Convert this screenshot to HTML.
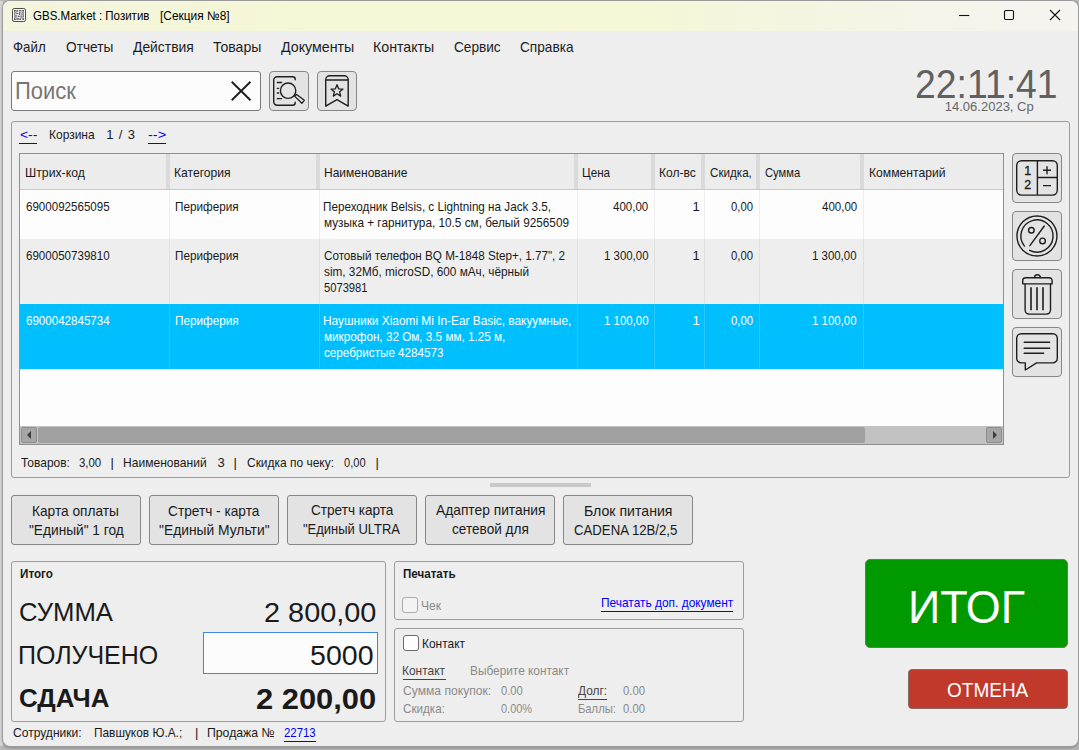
<!DOCTYPE html>
<html lang="ru">
<head>
<meta charset="utf-8">
<title>GBS.Market : Позитив [Секция №8]</title>
<style>
html,body{margin:0;padding:0;}
body{width:1079px;height:750px;overflow:hidden;background:#b7b7b7;font-family:"Liberation Sans",sans-serif;position:relative;}
#desk-left{position:absolute;left:0;top:0;width:3px;height:746px;background:#d8d8d8;}
#desk-top{position:absolute;left:0;top:0;width:1079px;height:1px;background:#b9b9b9;}
#win{position:absolute;left:2px;top:0;width:1075px;height:745px;border:1px solid #9b9b9b;border-radius:8px;background:#eeeeee;overflow:hidden;box-shadow:0 1px 3px rgba(0,0,0,.25);}
#root{position:absolute;left:0;top:0;width:1079px;height:750px;}
.abs{position:absolute;box-sizing:border-box;}
.t{position:absolute;white-space:pre;line-height:1em;transform-origin:0 0;}
#titlebar{left:3px;top:1px;width:1075px;height:30px;background:linear-gradient(90deg,#f4f5de 0,#f5f7d6 300px,#f5f7d7 640px,#f4f5e4 850px,#f5f4ee 1000px,#f5f4ee 100%);border-radius:7px 7px 0 0;}
.box{border:1px solid #9c9c9c;border-radius:3px;}
.btn{background:#e3e3e3;border:1px solid #868686;border-radius:4px;}
.hsep{background:#dadada;top:154px;height:35px;width:4px;}
.vline{background:rgba(0,0,0,0.06);top:190px;height:114px;width:1px;}
.vline2{background:rgba(255,255,255,0.16);top:304px;height:65px;width:1px;}
.ul{height:1px;}
</style>
</head>
<body>
<div id="desk-left"></div><div id="desk-top"></div>
<div id="win"></div>
<div id="root">
<div id="titlebar" class="abs"></div>
<!-- app icon -->
<svg class="abs" style="left:12px;top:8px" width="14" height="14" viewBox="0 0 14 14">
<rect x="0.5" y="0.5" width="13" height="13" rx="1.8" fill="#fcfcfc" stroke="#4a4a4a"/>
<g fill="#5a5a5a"><rect x="2" y="2" width="2.600" height="2.600"/><rect x="5.200" y="2" width="1" height="2"/><rect x="7" y="2" width="2" height="1.300"/><rect x="9.600" y="2" width="2.400" height="2.600"/><rect x="2" y="5.300" width="1.500" height="1.400"/><rect x="4.200" y="5" width="2.200" height="1.200"/><rect x="7" y="4" width="1.400" height="2.800"/><rect x="9.200" y="5.400" width="2.800" height="1.200"/><rect x="2" y="7.400" width="3.400" height="1.200"/><rect x="6" y="7.600" width="1.600" height="1.400"/><rect x="8.400" y="7.400" width="1.300" height="2.300"/><rect x="10.400" y="7.300" width="1.600" height="1.500"/><rect x="2" y="9.400" width="2.600" height="2.600"/><rect x="5.300" y="9.700" width="1.400" height="2.300"/><rect x="7.300" y="10.300" width="1.600" height="1.700"/><rect x="9.600" y="9.600" width="2.400" height="1.100"/><rect x="10.300" y="11" width="1.700" height="1"/></g>
<g fill="#fcfcfc"><rect x="2.800" y="2.800" width="1" height="1"/><rect x="10.300" y="2.800" width="1" height="1"/><rect x="2.800" y="10.200" width="1" height="1"/></g>
</svg>
<!-- window controls -->
<svg class="abs" style="left:950px;top:5px" width="120" height="22" viewBox="950 5 120 22" fill="none" stroke="#111" stroke-width="1.1">
<path d="M959 15.5H969.3"/>
<rect x="1004.5" y="10.5" width="9" height="9" rx="1.2"/>
<path d="M1050 10L1060 20M1060 10L1050 20"/>
</svg>

<!-- search box -->
<div class="abs" style="left:11px;top:71px;width:250px;height:40px;border:1px solid #7a7a7a;border-radius:3px;background:#fcfcfc;"></div>
<svg class="abs" style="left:229px;top:79px" width="24" height="24" viewBox="229 79 24 24" fill="none" stroke="#1e1e1e" stroke-width="1.9"><path d="M231.700 81.800L250.500 100.200M250.500 81.800L231.700 100.200"/></svg>
<!-- toolbar buttons -->
<div class="abs btn" style="left:269px;top:71px;width:40px;height:40px;"></div>
<div class="abs btn" style="left:317px;top:71px;width:40px;height:40px;"></div>
<svg class="abs" style="left:269px;top:71px" width="40" height="40" viewBox="269 71 40 40" fill="none" stroke="#1e1e1e" stroke-width="1.4" stroke-linecap="round" stroke-linejoin="round">
<path d="M295.2 79.7V79.2a2.500 2.500 0 0 0-2.500-2.500H277.200a3.500 3.500 0 0 0-3.500 3.500V101.700a3.500 3.500 0 0 0 3.500 3.500H292.700a2.500 2.500 0 0 0 2.500-2.500V102.300"/>
<path d="M277.300 82.500H281.600M277.300 88.300H278.700M277.300 93H278.700M277.300 98.700H281.600" stroke-width="1.300"/>
<circle cx="288.100" cy="90.700" r="7.700"/>
<path d="M294.600 96.100L296.600 94.400L304.300 100.300L301.900 103.300Z" stroke-width="1.300"/>
</svg>
<svg class="abs" style="left:317px;top:71px" width="40" height="40" viewBox="317 71 40 40" fill="none" stroke="#1e1e1e" stroke-width="1.4" stroke-linejoin="round">
<path d="M325.700 106.100V79.700a4 4 0 0 1 4-4H344.200a4 4 0 0 1 4 4V106.100L337 99.600Z"/>
<path d="M325.700 80H348.200" stroke-width="1.500"/>
<path d="M337.00 84.70L338.62 88.78L342.99 89.05L339.62 91.85L340.70 96.10L337.00 93.75L333.30 96.10L334.38 91.85L331.01 89.05L335.38 88.78Z" stroke-width="1.300"/>
</svg>

<!-- main group box -->
<div class="abs box" style="left:11px;top:121px;width:1059px;height:357px;"></div>
<div class="abs ul" style="left:19px;top:143px;width:18px;background:#0000ff;"></div>
<div class="abs ul" style="left:148px;top:143px;width:18px;background:#0000ff;"></div>

<!-- table -->
<div class="abs" style="left:19px;top:153px;width:985px;height:292px;border:1px solid #8f8f8f;background:#fdfdfd;"></div>
<div class="abs" style="left:20px;top:154px;width:983px;height:35px;background:#ececec;"></div>
<div class="abs" style="left:20px;top:189px;width:983px;height:1px;background:#c9c9c9;"></div>
<div class="abs hsep" style="left:166px;"></div>
<div class="abs hsep" style="left:316px;"></div>
<div class="abs hsep" style="left:574px;"></div>
<div class="abs hsep" style="left:651px;"></div>
<div class="abs hsep" style="left:701px;"></div>
<div class="abs hsep" style="left:756px;"></div>
<div class="abs hsep" style="left:860px;"></div>
<div class="abs" style="left:20px;top:239px;width:983px;height:65px;background:#eeeeee;"></div>
<div class="abs" style="left:20px;top:303px;width:983px;height:1px;background:#f8eeea;"></div>
<div class="abs" style="left:20px;top:304px;width:983px;height:65px;background:#00bfff;"></div>
<div class="abs vline" style="left:169px;"></div>
<div class="abs vline" style="left:319px;"></div>
<div class="abs vline" style="left:577px;"></div>
<div class="abs vline" style="left:654px;"></div>
<div class="abs vline" style="left:704px;"></div>
<div class="abs vline" style="left:759px;"></div>
<div class="abs vline" style="left:863px;"></div>
<div class="abs vline2" style="left:169px;"></div>
<div class="abs vline2" style="left:319px;"></div>
<div class="abs vline2" style="left:577px;"></div>
<div class="abs vline2" style="left:654px;"></div>
<div class="abs vline2" style="left:704px;"></div>
<div class="abs vline2" style="left:759px;"></div>
<div class="abs vline2" style="left:863px;"></div>
<!-- h scrollbar -->
<div class="abs" style="left:20px;top:426px;width:983px;height:18px;background:#c2c2c2;"></div>
<div class="abs" style="left:38px;top:427px;width:827px;height:16px;background:#a0a0a0;border-radius:2px;"></div>
<div class="abs" style="left:21px;top:427px;width:16px;height:16px;background:#a6a6a6;border:1px solid #8e8e8e;border-radius:2px;"></div>
<div class="abs" style="left:986px;top:427px;width:16px;height:16px;background:#a6a6a6;border:1px solid #8e8e8e;border-radius:2px;"></div>
<svg class="abs" style="left:20px;top:426px" width="983" height="18" viewBox="20 426 983 18" fill="#3c3c3c"><path d="M27 435L31 431V439Z"/><path d="M997 435L993 431V439Z"/></svg>

<!-- side buttons -->
<div class="abs btn" style="left:1012px;top:153px;width:50px;height:50px;"></div>
<div class="abs btn" style="left:1012px;top:211px;width:50px;height:50px;"></div>
<div class="abs btn" style="left:1012px;top:269px;width:50px;height:50px;"></div>
<div class="abs btn" style="left:1012px;top:327px;width:50px;height:50px;"></div>
<svg class="abs" style="left:1012px;top:153px" width="50" height="224" viewBox="1012 153 50 224" fill="none" stroke="#1e1e1e" stroke-width="1.400" stroke-linecap="round" stroke-linejoin="round">
<!-- 1: quantity -->
<rect x="1016.700" y="160.700" width="40.600" height="34.400" rx="4.800"/>
<path d="M1037.400 160.700V195.100M1037.400 177.500H1057.300" stroke-linecap="butt"/>
<path d="M1043 170.200H1051M1047 166.200V174.200M1043 185.600H1051" stroke-linecap="butt"/>
<text x="1027.700" y="174.800" text-anchor="middle" font-family="Liberation Sans, sans-serif" font-size="12.400" fill="#1e1e1e" stroke="#1e1e1e" stroke-width="0.350">1</text>
<text x="1027.700" y="189" text-anchor="middle" font-family="Liberation Sans, sans-serif" font-size="12.400" fill="#1e1e1e" stroke="#1e1e1e" stroke-width="0.350">2</text>
<!-- 2: percent -->
<circle cx="1036.960" cy="236" r="20"/>
<path d="M1024.45 246.13A16.1 16.1 0 1 1 1029.65 250.35"/>
<circle cx="1031.360" cy="230.240" r="2.800"/>
<circle cx="1042.560" cy="240.960" r="2.800"/>
<path d="M1044.300 226L1029.900 245.700"/>
<!-- 3: trash -->
<path d="M1034.500 277.600a2.900 2.900 0 0 1 5.800 0"/>
<path d="M1022.700 283.900V280.700a3 3 0 0 1 3-3H1049.100a3 3 0 0 1 3 3V283.900Z"/>
<path d="M1025.100 284V310.100a4 4 0 0 0 4 4H1046.500a4 4 0 0 0 4-4V284"/>
<path d="M1031 287.300V310.300M1037 287.300V310.300M1043 287.300V310.300" stroke-width="1.600" stroke-linecap="butt"/>
<!-- 4: comment -->
<path d="M1021.200 333.700H1052.800a4.500 4.500 0 0 1 4.500 4.500V358.400a4.500 4.500 0 0 1-4.500 4.500H1036.600L1025.300 370V362.900H1021.200a4.500 4.500 0 0 1-4.500-4.500V338.200a4.500 4.500 0 0 1 4.500-4.500Z"/>
<path d="M1024.200 342.200H1049.600M1024.200 348.200H1049.600M1024.200 353.200H1043.600" stroke-width="1.500"/>
</svg>

<!-- splitter grip -->
<div class="abs" style="left:490px;top:483px;width:101px;height:4px;background:#c8c8c8;"></div>

<!-- quick buttons -->
<div class="abs btn" style="left:11px;top:495px;width:130px;height:50px;border-radius:3px;"></div>
<div class="abs btn" style="left:149px;top:495px;width:130px;height:50px;border-radius:3px;"></div>
<div class="abs btn" style="left:287px;top:495px;width:130px;height:50px;border-radius:3px;"></div>
<div class="abs btn" style="left:425px;top:495px;width:130px;height:50px;border-radius:3px;"></div>
<div class="abs btn" style="left:563px;top:495px;width:130px;height:50px;border-radius:3px;"></div>

<!-- Итого -->
<div class="abs box" style="left:11px;top:561px;width:375px;height:161px;"></div>
<div class="abs" style="left:203px;top:632px;width:175px;height:42px;border:1px solid #3f8ad8;background:#fcfcfc;"></div>
<!-- Печатать -->
<div class="abs box" style="left:394px;top:561px;width:350px;height:59px;"></div>
<div class="abs" style="left:402px;top:597px;width:16px;height:16px;border:1px solid #ababab;border-radius:3px;background:#f3f3f3;"></div>
<div class="abs ul" style="left:601px;top:611px;width:132px;background:#0000ff;"></div>
<!-- Контакт -->
<div class="abs box" style="left:394px;top:628px;width:350px;height:94px;"></div>
<div class="abs" style="left:403px;top:635px;width:16px;height:16px;border:1px solid #6a6a6a;border-radius:3px;background:#fdfdfd;"></div>
<div class="abs ul" style="left:403px;top:679px;width:43px;background:#444;"></div>
<div class="abs ul" style="left:578px;top:699px;width:29px;background:#444;"></div>
<!-- ИТОГ / ОТМЕНА -->
<div class="abs" style="left:865px;top:559px;width:203px;height:89px;background:#009900;border:1px solid #707070;border-radius:5px;"></div>
<div class="abs" style="left:908px;top:669px;width:160px;height:40px;background:#c0392b;border:1px solid #8a6a66;border-radius:4px;"></div>
<!-- status bar -->
<div class="abs ul" style="left:284px;top:741px;width:32px;background:#0000ff;"></div>

<span class="t" style="left:33.30px;top:10.02px;font-size:12.2px;color:#000;transform:scaleX(0.9453);">GBS.Market : Позитив</span>
<span class="t" style="left:160.00px;top:10.02px;font-size:12.2px;color:#000;transform:scaleX(0.9771);">[Секция №8]</span>
<span class="t" style="left:12.70px;top:40.01px;font-size:14.4px;color:#1c1c1c;transform:scaleX(0.9233);">Файл</span>
<span class="t" style="left:66.00px;top:40.01px;font-size:14.4px;color:#1c1c1c;transform:scaleX(0.9515);">Отчеты</span>
<span class="t" style="left:133.00px;top:40.01px;font-size:14.4px;color:#1c1c1c;transform:scaleX(0.9637);">Действия</span>
<span class="t" style="left:213.00px;top:40.01px;font-size:14.4px;color:#1c1c1c;transform:scaleX(0.9764);">Товары</span>
<span class="t" style="left:281.00px;top:40.01px;font-size:14.4px;color:#1c1c1c;transform:scaleX(0.9887);">Документы</span>
<span class="t" style="left:373.01px;top:40.01px;font-size:14.4px;color:#1c1c1c;transform:scaleX(0.9866);">Контакты</span>
<span class="t" style="left:453.50px;top:40.01px;font-size:14.4px;color:#1c1c1c;transform:scaleX(0.9474);">Сервис</span>
<span class="t" style="left:520.00px;top:40.01px;font-size:14.4px;color:#1c1c1c;transform:scaleX(0.9478);">Справка</span>
<span class="t" style="left:15.36px;top:80.00px;font-size:23.4px;color:#767676;transform:scaleX(0.9399);">Поиск</span>
<span class="t" style="left:914.72px;top:65.01px;font-size:39.8px;color:#606060;transform:scaleX(0.9380);">22:11:41</span>
<span class="t" style="left:944.80px;top:100.00px;font-size:13.0px;color:#666;">14.06.2023, Ср</span>
<span class="t" style="left:20.00px;top:128.00px;font-size:13.0px;color:#0000ff;transform:scaleX(1.0678);">&lt;--</span>
<span class="t" style="left:49.48px;top:128.00px;font-size:13.0px;color:#1a1a1a;transform:scaleX(0.9211);">Корзина</span>
<span class="t" style="left:106.30px;top:128.00px;font-size:13.0px;color:#1a1a1a;word-spacing:1.72px;">1 / 3</span>
<span class="t" style="left:148.30px;top:128.00px;font-size:13.0px;color:#0000ff;transform:scaleX(1.1176);">--&gt;</span>
<span class="t" style="left:24.76px;top:166.00px;font-size:13.0px;color:#1a1a1a;transform:scaleX(0.9418);">Штрих-код</span>
<span class="t" style="left:174.37px;top:166.00px;font-size:13.0px;color:#1a1a1a;transform:scaleX(0.9325);">Категория</span>
<span class="t" style="left:324.38px;top:166.00px;font-size:13.0px;color:#1a1a1a;transform:scaleX(0.9248);">Наименование</span>
<span class="t" style="left:582.40px;top:166.00px;font-size:13.0px;color:#1a1a1a;transform:scaleX(0.8992);">Цена</span>
<span class="t" style="left:659.07px;top:166.00px;font-size:13.0px;color:#1a1a1a;transform:scaleX(0.9262);">Кол-вс</span>
<span class="t" style="left:710.00px;top:166.00px;font-size:13.0px;color:#1a1a1a;transform:scaleX(0.8954);">Скидка,</span>
<span class="t" style="left:765.00px;top:166.00px;font-size:13.0px;color:#1a1a1a;transform:scaleX(0.8602);">Сумма</span>
<span class="t" style="left:868.57px;top:166.00px;font-size:13.0px;color:#1a1a1a;transform:scaleX(0.9340);">Комментарий</span>
<span class="t" style="left:26.20px;top:200.00px;font-size:13.0px;color:#1a1a1a;transform:scaleX(0.8895);">6900092565095</span>
<span class="t" style="left:175.40px;top:200.00px;font-size:13.0px;color:#1a1a1a;transform:scaleX(0.9024);">Периферия</span>
<span class="t" style="left:323.30px;top:200.00px;font-size:13.0px;color:#1a1a1a;transform:scaleX(0.8985);">Переходник Belsis, с Lightning на Jack 3.5,</span>
<span class="t" style="left:324.20px;top:216.00px;font-size:13.0px;color:#1a1a1a;transform:scaleX(0.9058);">музыка + гарнитура, 10.5 см, белый 9256509</span>
<span class="t" style="left:613.00px;top:200.00px;font-size:13.0px;color:#1a1a1a;transform:scaleX(0.8854);">400,00</span>
<span class="t" style="left:692.50px;top:200.00px;font-size:13.0px;color:#1a1a1a;">1</span>
<span class="t" style="left:730.70px;top:200.00px;font-size:13.0px;color:#1a1a1a;transform:scaleX(0.8695);">0,00</span>
<span class="t" style="left:821.70px;top:200.00px;font-size:13.0px;color:#1a1a1a;transform:scaleX(0.8854);">400,00</span>
<span class="t" style="left:26.20px;top:249.00px;font-size:13.0px;color:#1a1a1a;transform:scaleX(0.8895);">6900050739810</span>
<span class="t" style="left:175.40px;top:249.00px;font-size:13.0px;color:#1a1a1a;transform:scaleX(0.9024);">Периферия</span>
<span class="t" style="left:324.20px;top:249.00px;font-size:13.0px;color:#1a1a1a;transform:scaleX(0.8971);">Сотовый телефон BQ M-1848 Step+, 1.77", 2</span>
<span class="t" style="left:324.20px;top:265.00px;font-size:13.0px;color:#1a1a1a;transform:scaleX(0.9057);">sim, 32Мб, microSD, 600 мАч, чёрный</span>
<span class="t" style="left:324.20px;top:281.00px;font-size:13.0px;color:#1a1a1a;transform:scaleX(0.8595);">5073981</span>
<span class="t" style="left:603.70px;top:249.00px;font-size:13.0px;color:#1a1a1a;transform:scaleX(0.8794);">1 300,00</span>
<span class="t" style="left:692.50px;top:249.00px;font-size:13.0px;color:#1a1a1a;">1</span>
<span class="t" style="left:730.70px;top:249.00px;font-size:13.0px;color:#1a1a1a;transform:scaleX(0.8695);">0,00</span>
<span class="t" style="left:812.40px;top:249.00px;font-size:13.0px;color:#1a1a1a;transform:scaleX(0.8794);">1 300,00</span>
<span class="t" style="left:26.20px;top:314.00px;font-size:13.0px;color:#ffffff;transform:scaleX(0.8895);">6900042845734</span>
<span class="t" style="left:175.40px;top:314.00px;font-size:13.0px;color:#ffffff;transform:scaleX(0.9024);">Периферия</span>
<span class="t" style="left:323.29px;top:314.00px;font-size:13.0px;color:#ffffff;transform:scaleX(0.9125);">Наушники Xiaomi Mi In-Ear Basic, вакуумные,</span>
<span class="t" style="left:324.20px;top:330.00px;font-size:13.0px;color:#ffffff;transform:scaleX(0.9011);">микрофон, 32 Ом, 3.5 мм, 1.25 м,</span>
<span class="t" style="left:324.20px;top:346.00px;font-size:13.0px;color:#ffffff;transform:scaleX(0.8970);">серебристые 4284573</span>
<span class="t" style="left:603.70px;top:314.00px;font-size:13.0px;color:#ffffff;transform:scaleX(0.8794);">1 100,00</span>
<span class="t" style="left:692.50px;top:314.00px;font-size:13.0px;color:#ffffff;">1</span>
<span class="t" style="left:730.70px;top:314.00px;font-size:13.0px;color:#ffffff;transform:scaleX(0.8695);">0,00</span>
<span class="t" style="left:812.40px;top:314.00px;font-size:13.0px;color:#ffffff;transform:scaleX(0.8794);">1 100,00</span>
<span class="t" style="left:20.50px;top:456.00px;font-size:13.0px;color:#1a1a1a;transform:scaleX(0.9198);">Товаров:</span>
<span class="t" style="left:78.80px;top:456.00px;font-size:13.0px;color:#1a1a1a;transform:scaleX(0.8775);">3,00</span>
<span class="t" style="left:110.50px;top:456.00px;font-size:13.0px;color:#1a1a1a;">|</span>
<span class="t" style="left:123.37px;top:456.00px;font-size:13.0px;color:#1a1a1a;transform:scaleX(0.9281);">Наименований</span>
<span class="t" style="left:217.50px;top:456.00px;font-size:13.0px;color:#1a1a1a;">3</span>
<span class="t" style="left:233.50px;top:456.00px;font-size:13.0px;color:#1a1a1a;">|</span>
<span class="t" style="left:246.80px;top:456.00px;font-size:13.0px;color:#1a1a1a;transform:scaleX(0.9196);">Скидка по чеку:</span>
<span class="t" style="left:343.80px;top:456.00px;font-size:13.0px;color:#1a1a1a;transform:scaleX(0.8535);">0,00</span>
<span class="t" style="left:375.50px;top:456.00px;font-size:13.0px;color:#1a1a1a;">|</span>
<span class="t" style="left:32.03px;top:504.01px;font-size:14.2px;color:#1a1a1a;transform:scaleX(0.9659);">Карта оплаты</span>
<span class="t" style="left:28.50px;top:523.01px;font-size:14.2px;color:#1a1a1a;transform:scaleX(0.9655);">"Единый" 1 год</span>
<span class="t" style="left:168.00px;top:504.01px;font-size:14.2px;color:#1a1a1a;transform:scaleX(0.9644);">Стретч - карта</span>
<span class="t" style="left:158.50px;top:523.01px;font-size:14.2px;color:#1a1a1a;transform:scaleX(0.9749);">"Единый Мульти"</span>
<span class="t" style="left:310.50px;top:503.01px;font-size:14.2px;color:#1a1a1a;transform:scaleX(0.9570);">Стретч карта</span>
<span class="t" style="left:303.30px;top:522.01px;font-size:14.2px;color:#1a1a1a;transform:scaleX(0.9147);">"Единый ULTRA</span>
<span class="t" style="left:435.50px;top:503.01px;font-size:14.2px;color:#1a1a1a;transform:scaleX(0.9717);">Адаптер питания</span>
<span class="t" style="left:451.80px;top:522.01px;font-size:14.2px;color:#1a1a1a;transform:scaleX(0.9593);">сетевой для</span>
<span class="t" style="left:583.50px;top:504.01px;font-size:14.2px;color:#1a1a1a;transform:scaleX(0.9951);">Блок питания</span>
<span class="t" style="left:573.80px;top:523.01px;font-size:14.2px;color:#1a1a1a;transform:scaleX(0.9296);">CADENA 12В/2,5</span>
<span class="t" style="left:19.50px;top:568.00px;font-size:12.4px;color:#1a1a1a;font-weight:700;transform:scaleX(0.9413);">Итого</span>
<span class="t" style="left:18.52px;top:599.00px;font-size:26.3px;color:#1a1a1a;transform:scaleX(0.9766);">СУММА</span>
<span class="t" style="left:17.60px;top:642.00px;font-size:26.3px;color:#1a1a1a;transform:scaleX(0.9505);">ПОЛУЧЕНО</span>
<span class="t" style="left:18.52px;top:685.00px;font-size:26.3px;color:#1a1a1a;font-weight:700;transform:scaleX(0.9841);">СДАЧА</span>
<span class="t" style="left:263.77px;top:599.00px;font-size:28.0px;color:#1a1a1a;transform:scaleX(1.0315);">2 800,00</span>
<span class="t" style="left:309.68px;top:642.00px;font-size:28.0px;color:#1a1a1a;transform:scaleX(1.0195);">5000</span>
<span class="t" style="left:255.75px;top:684.00px;font-size:29.4px;color:#1a1a1a;font-weight:700;transform:scaleX(1.0508);">2 200,00</span>
<span class="t" style="left:402.50px;top:568.00px;font-size:12.4px;color:#1a1a1a;font-weight:700;transform:scaleX(0.9346);">Печатать</span>
<span class="t" style="left:421.28px;top:599.00px;font-size:13.0px;color:#8a8a8a;transform:scaleX(0.9237);">Чек</span>
<span class="t" style="left:600.68px;top:596.00px;font-size:13.0px;color:#0000ff;transform:scaleX(0.9165);">Печатать доп. документ</span>
<span class="t" style="left:422.48px;top:637.01px;font-size:13.0px;color:#1a1a1a;transform:scaleX(0.9181);">Контакт</span>
<span class="t" style="left:402.38px;top:664.00px;font-size:13.0px;color:#444;transform:scaleX(0.9203);">Контакт</span>
<span class="t" style="left:470.49px;top:664.00px;font-size:13.0px;color:#8a8a8a;transform:scaleX(0.9109);">Выберите контакт</span>
<span class="t" style="left:403.30px;top:684.00px;font-size:13.0px;color:#8a8a8a;transform:scaleX(0.9317);">Сумма покупок:</span>
<span class="t" style="left:501.30px;top:684.00px;font-size:13.0px;color:#8a8a8a;transform:scaleX(0.8615);">0.00</span>
<span class="t" style="left:578.40px;top:684.00px;font-size:13.0px;color:#444;transform:scaleX(0.9128);">Долг:</span>
<span class="t" style="left:622.90px;top:684.00px;font-size:13.0px;color:#8a8a8a;transform:scaleX(0.8735);">0.00</span>
<span class="t" style="left:403.30px;top:702.00px;font-size:13.0px;color:#8a8a8a;transform:scaleX(0.8975);">Скидка:</span>
<span class="t" style="left:501.30px;top:702.00px;font-size:13.0px;color:#8a8a8a;transform:scaleX(0.8418);">0.00%</span>
<span class="t" style="left:577.54px;top:702.00px;font-size:13.0px;color:#8a8a8a;transform:scaleX(0.8634);">Баллы:</span>
<span class="t" style="left:622.90px;top:702.00px;font-size:13.0px;color:#8a8a8a;transform:scaleX(0.8735);">0.00</span>
<span class="t" style="left:908.03px;top:583.01px;font-size:47.0px;color:#fff;transform:scaleX(0.9560);">ИТОГ</span>
<span class="t" style="left:947.00px;top:680.01px;font-size:20.5px;color:#fff;transform:scaleX(0.9270);">ОТМЕНА</span>
<span class="t" style="left:13.30px;top:726.00px;font-size:13.0px;color:#1a1a1a;transform:scaleX(0.9276);">Сотрудники:</span>
<span class="t" style="left:94.39px;top:726.00px;font-size:13.0px;color:#1a1a1a;transform:scaleX(0.9125);">Павшуков Ю.А.;</span>
<span class="t" style="left:195.00px;top:726.00px;font-size:13.0px;color:#1a1a1a;">|</span>
<span class="t" style="left:207.06px;top:726.00px;font-size:13.0px;color:#1a1a1a;transform:scaleX(0.9411);">Продажа №</span>
<span class="t" style="left:284.00px;top:726.00px;font-size:13.0px;color:#0000ff;transform:scaleX(0.8770);">22713</span>
</div>
</body>
</html>
